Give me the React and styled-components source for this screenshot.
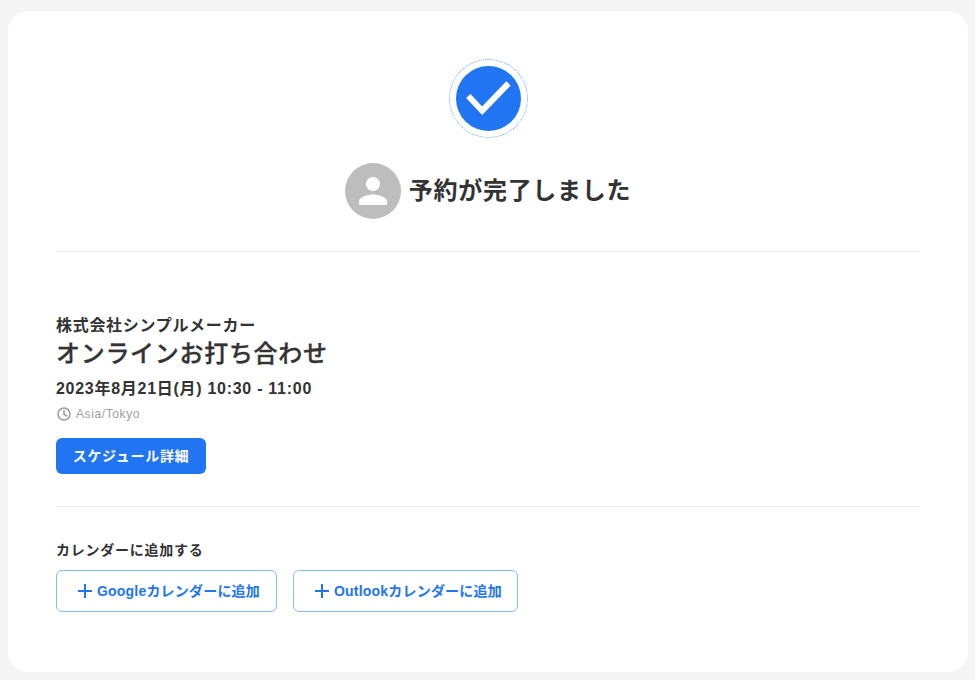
import styled, { createGlobalStyle } from 'styled-components';

const colors = {
    blue: '#2175f3',
    text: '#333',
    line: '#ececec',
    page: '#f5f5f5',
};

const fontStack = '"Liberation Sans", "Noto Sans CJK JP", sans-serif';

const GlobalStyle = createGlobalStyle`
    html, body {
        margin: 0;
        background: ${colors.page};
        font-family: ${fontStack};
        color: ${colors.text};
    }
    * { box-sizing: border-box; }
`;

const Page = styled.div`
    width: 975px;
    height: 680px;
    padding: 11px 7px 8px 8px;
    overflow: hidden;
`;

const Card = styled.main`
    height: 661px;
    padding: 48px 48px 0;
    background: #fff;
    border-radius: 20px;
`;

const Header = styled.header`
    display: flex;
    flex-direction: column;
    align-items: center;
    padding-bottom: 32px;
    border-bottom: 1px solid ${colors.line};
`;

const CheckRing = styled.div`
    width: 79px;
    height: 79px;
    border: 1px dotted #5c9af6;
    border-radius: 50%;
    display: flex;
    align-items: center;
    justify-content: center;
`;

const CheckDisc = styled.div`
    width: 65px;
    height: 65px;
    border-radius: 50%;
    background: ${colors.blue};
    display: flex;
    align-items: center;
    justify-content: center;
`;

const TitleRow = styled.div`
    display: flex;
    align-items: center;
    gap: 8px;
    margin-top: 25px;
`;

const Avatar = styled.div`
    width: 56px;
    height: 56px;
    border-radius: 50%;
    background: #bdbdbd;
    display: flex;
    align-items: center;
    justify-content: center;
`;

const Title = styled.h1`
    margin: 0;
    font-size: 24px;
    line-height: 36px;
    font-weight: 700;
    letter-spacing: 0.7px;
`;

const Details = styled.section`
    padding: 64px 0 32px;
    border-bottom: 1px solid ${colors.line};
`;

const Company = styled.div`
    font-size: 16px;
    line-height: 20px;
    font-weight: 700;
    letter-spacing: 0.7px;
`;

const EventName = styled.h2`
    margin: 0;
    font-size: 24px;
    line-height: 36px;
    font-weight: 500;
    letter-spacing: 0.7px;
    -webkit-text-stroke: 0.3px ${colors.text};
`;

const DateTime = styled.div`
    margin-top: 5px;
    font-size: 16px;
    line-height: 24px;
    font-weight: 700;
    letter-spacing: 0.72px;
`;

const Zone = styled.div`
    display: flex;
    align-items: center;
    gap: 4px;
    margin-top: 3px;
    font-size: 12px;
    line-height: 20px;
    letter-spacing: 0.6px;
    color: #9e9e9e;
`;

const DetailButton = styled.button`
    display: block;
    width: 150px;
    height: 36px;
    margin-top: 14px;
    padding: 0;
    border: 0;
    border-radius: 6px;
    background: ${colors.blue};
    color: #fff;
    font: 700 14px/20px ${fontStack};
    letter-spacing: 0.7px;
`;

const CalendarSection = styled.section`
    padding-top: 32px;
`;

const CalendarLabel = styled.div`
    font-size: 14px;
    line-height: 22px;
    font-weight: 700;
    letter-spacing: 0.75px;
`;

const CalendarRow = styled.div`
    display: flex;
    gap: 16px;
    margin-top: 9px;
`;

const CalendarButton = styled.button`
    display: flex;
    align-items: center;
    gap: 4px;
    width: ${(p) => p.$width}px;
    height: 42px;
    padding: 0 0 0 20px;
    border: 1px solid #8ab9f8;
    border-radius: 6px;
    background: #fff;
    color: ${colors.blue};
    font: 700 14px/20px ${fontStack};
    letter-spacing: 0.2px;
    white-space: nowrap;
`;

const CheckIcon = () => (
    <svg width="65" height="65" viewBox="0 0 65 65" fill="none">
        <path d="M12.3 30 L26.2 44.7 L52.5 17.4" stroke="#fff" strokeWidth="6" />
    </svg>
);

const PersonIcon = () => (
    <svg width="42" height="42" viewBox="0 0 24 24" fill="#fff">
        <path d="M12 12c2.21 0 4-1.79 4-4s-1.79-4-4-4-4 1.79-4 4 1.79 4 4 4zm0 2c-2.67 0-8 1.34-8 4v2h16v-2c0-2.66-5.33-4-8-4z" />
    </svg>
);

const ClockIcon = () => (
    <svg width="16" height="16" viewBox="0 0 16 16" fill="none" stroke="#999" strokeWidth="1.5">
        <circle cx="8" cy="8" r="6" />
        <path d="M8 4v4.3l3 1.8" />
    </svg>
);

const PlusIcon = () => (
    <svg width="16" height="16" viewBox="0 0 16 16" fill="none" stroke={colors.blue} strokeWidth="2">
        <path d="M1 8h14M8 1v14" />
    </svg>
);

export default function App() {
    return (
        <Page>
            <GlobalStyle />
            <Card>
                <Header>
                    <CheckRing>
                        <CheckDisc>
                            <CheckIcon />
                        </CheckDisc>
                    </CheckRing>
                    <TitleRow>
                        <Avatar>
                            <PersonIcon />
                        </Avatar>
                        <Title>予約が完了しました</Title>
                    </TitleRow>
                </Header>
                <Details>
                    <Company>株式会社シンプルメーカー</Company>
                    <EventName>オンラインお打ち合わせ</EventName>
                    <DateTime>2023年8月21日(月) 10:30 - 11:00</DateTime>
                    <Zone>
                        <ClockIcon />
                        Asia/Tokyo
                    </Zone>
                    <DetailButton>スケジュール詳細</DetailButton>
                </Details>
                <CalendarSection>
                    <CalendarLabel>カレンダーに追加する</CalendarLabel>
                    <CalendarRow>
                        <CalendarButton $width={221}>
                            <PlusIcon />
                            Googleカレンダーに追加
                        </CalendarButton>
                        <CalendarButton $width={225}>
                            <PlusIcon />
                            Outlookカレンダーに追加
                        </CalendarButton>
                    </CalendarRow>
                </CalendarSection>
            </Card>
        </Page>
    );
}
